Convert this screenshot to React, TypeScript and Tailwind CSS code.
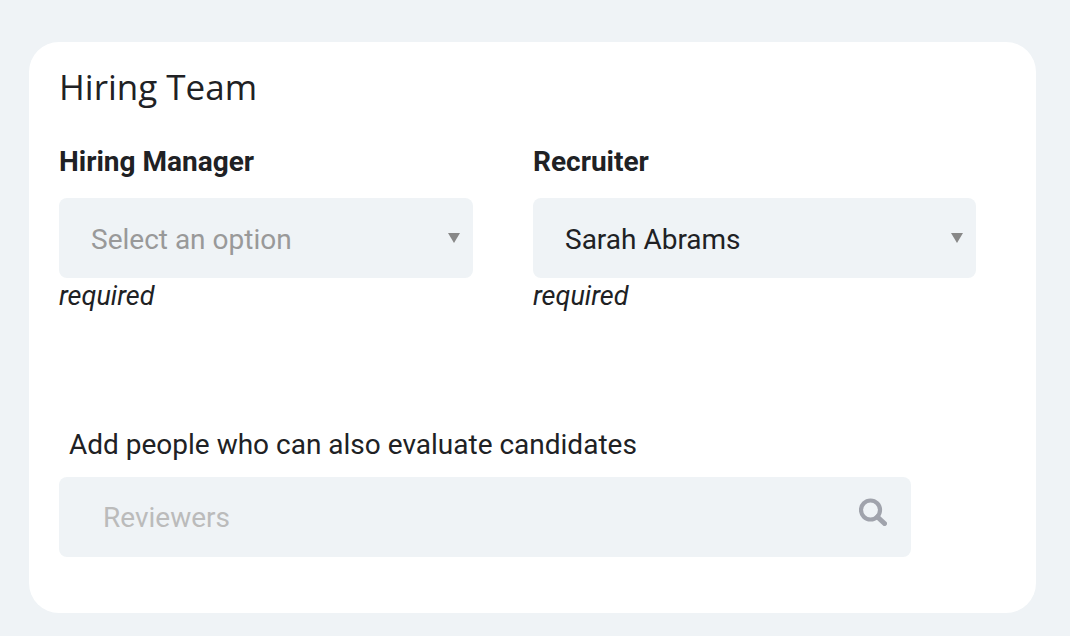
import { useState } from "react";
import { clsx } from "clsx";

const people = ["Sarah Abrams"];

interface PersonSelectProps {
  id: string;
  label: string;
  defaultValue?: string;
}

function PersonSelect({ id, label, defaultValue = "" }: PersonSelectProps) {
  const [value, setValue] = useState(defaultValue);

  return (
    <div>
      <label htmlFor={id} className="block font-bold leading-10">
        {label}
      </label>
      <div className="relative mt-4">
        <select
          id={id}
          required
          value={value}
          onChange={(e) => setValue(e.target.value)}
          aria-describedby={`${id}-hint`}
          className={clsx(
            "block h-20 w-full appearance-none rounded-lg bg-[#eff3f6] pl-8 pr-10 pt-1 outline-none",
            value ? "text-[#202124]" : "text-[#999999]"
          )}
        >
          <option value="">Select an option</option>
          {people.map((person) => (
            <option key={person} value={person}>
              {person}
            </option>
          ))}
        </select>
        <svg
          viewBox="0 0 12 10"
          className="pointer-events-none absolute right-[13px] top-[35px] h-[10px] w-3 fill-[#888888]"
          aria-hidden="true"
        >
          <path d="M0 0h12L6 10z" />
        </svg>
      </div>
      <p id={`${id}-hint`} className="text-[27px] italic leading-9">
        required
      </p>
    </div>
  );
}

function ReviewerSearch() {
  return (
    <div className="mt-28 mr-[65px]">
      <label htmlFor="reviewers" className="block pl-[10px] leading-[38px]">
        Add people who can also evaluate candidates
      </label>
      <div className="relative mt-[13px]">
        <input
          id="reviewers"
          type="text"
          placeholder="Reviewers"
          className="block h-20 w-full rounded-lg bg-[#eff3f6] pl-11 pr-16 outline-none placeholder:text-[#bbbbbb]"
        />
        <button
          type="button"
          aria-label="Search"
          className="absolute right-6 top-[21px] text-[#a0a3ac]"
        >
          <svg
            viewBox="0 0 28 28"
            className="h-7 w-7"
            fill="none"
            stroke="currentColor"
            aria-hidden="true"
          >
            <circle cx="11.5" cy="12" r="9.5" strokeWidth="4.2" />
            <path d="M18.5 19l7 6.5" strokeWidth="5" strokeLinecap="round" />
          </svg>
        </button>
      </div>
    </div>
  );
}

export default function App() {
  return (
    <main className="min-h-screen bg-[#eff3f6] pt-[42px] pr-[34px] pb-[23px] pl-[29px] font-['Roboto',sans-serif] text-[28px] text-[#202124]">
      <section className="rounded-[30px] bg-white pt-[21px] pr-[60px] pb-14 pl-[30px]">
        <h1 className="font-['Open_Sans',sans-serif] text-[35px] font-normal leading-[48px]">
          Hiring Team
        </h1>
        <div className="mt-[31px] grid grid-cols-[414fr_443fr] gap-[60px]">
          <PersonSelect id="hiring-manager" label="Hiring Manager" />
          <PersonSelect
            id="recruiter"
            label="Recruiter"
            defaultValue="Sarah Abrams"
          />
        </div>
        <ReviewerSearch />
      </section>
    </main>
  );
}
